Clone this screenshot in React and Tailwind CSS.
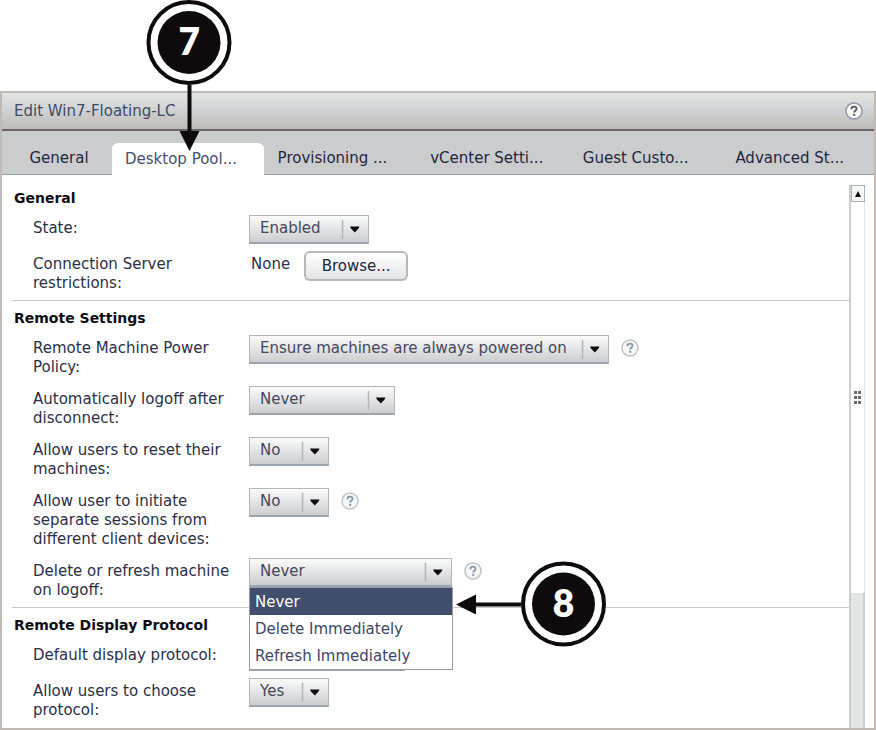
import React from "react";

const TABS = ["General", "Desktop Pool...", "Provisioning ...", "vCenter Setti...", "Guest Custo...", "Advanced St..."];

function HelpButton({ dark }) {
  return (
    <button type="button" aria-label="Help" className="block size-[18px] shrink-0">
      <svg viewBox="0 0 18 18" className="size-full">
        <circle cx="9" cy="9" r="8" fill="#f6f7f7" stroke={dark ? "#8d99a8" : "#c0c2c3"} strokeWidth="1.5" />
        <path
          d="M6.4 7.2C6.4 5.4 7.5 4.7 9 4.7s2.6.8 2.6 2.1c0 1.7-2.4 1.8-2.4 3.7"
          fill="none"
          stroke={dark ? "#5b5358" : "#8397ae"}
          strokeWidth="1.8"
        />
        <rect x="8.2" y="11.8" width="2" height="2" fill={dark ? "#5b5358" : "#8397ae"} />
      </svg>
    </button>
  );
}

function Select({ id, options, width, children }) {
  return (
    <div className={"relative shrink-0 " + width}>
      <select
        id={id}
        className="block h-[29px] w-full appearance-none border border-b-2 border-[#b5b5b3] border-b-[#9aa5b1] bg-linear-to-b from-[#fbfbfb] to-[#cbcdcf] pr-7 pb-0.5 pl-2.5 text-[15px] leading-5 text-[#45485c] outline-none"
      >
        {options.map((o) => (
          <option key={o}>{o}</option>
        ))}
      </select>
      <svg viewBox="0 0 28 28" className="pointer-events-none absolute top-0 right-0 size-7">
        <path d="M1.500 5V24" stroke="#b3b5b6" strokeWidth="1.5" />
        <path d="M9 11.500h9.500l-1 2-3.750 4-3.750-4z" fill="#0e0b10" />
      </svg>
      {children}
    </div>
  );
}

function Row({ label, id, children, help }) {
  return (
    <div className="flex items-start">
      <label htmlFor={id} className="w-[216px] shrink-0 pt-1 pr-3 text-[#2a3047]">
        {label}
      </label>
      {children}
      {help && (
        <div className="pt-1 pl-3">
          <HelpButton />
        </div>
      )}
    </div>
  );
}

function Section({ title, gap, children }) {
  return (
    <section className="ml-2.5 border-b border-[#c6c8c9] pt-2 pb-[7px] last:border-b-0">
      <h2 className="mb-[7px] pl-0.5 text-[14px] font-bold text-[#0f0d14]">{title}</h2>
      <div className={"flex flex-col pl-[21px] " + gap}>{children}</div>
    </section>
  );
}

function Badge({ n }) {
  return (
    <span className="flex size-[85px] shrink-0 items-center justify-center rounded-full border-4 border-[#0f0b0d] bg-white">
      <span className="flex size-[63px] items-center justify-center rounded-full bg-[#0f0b0d] pb-1 font-[Lato,sans-serif] text-[37px] leading-none font-extrabold text-white">
        {n}
      </span>
    </span>
  );
}

function LogoffMenu() {
  return (
    <ul
      role="listbox"
      aria-label="Delete or refresh machine on logoff"
      className="absolute top-[29px] left-0 z-10 w-[204px] border border-[#9a9ca3] bg-white leading-[28px] text-[#3d4768]"
    >
      <li role="option" aria-selected="true" className="relative h-[27px] bg-[#414e6e] pl-[5px] text-white">
        Never
        <span className="absolute top-[60%] left-full flex -translate-y-1/2 items-center pl-1">
          <svg viewBox="0 0 65 20" className="h-5 w-[65px]">
            <path d="M0 10L20 0V8H65V12H20V20z" fill="#0f0b0d" />
          </svg>
          <Badge n="8" />
        </span>
      </li>
      <li role="option" aria-selected="false" className="h-[27px] pl-[5px]">
        Delete Immediately
      </li>
      <li role="option" aria-selected="false" className="h-[27px] pl-[5px]">
        Refresh Immediately
      </li>
    </ul>
  );
}

export default function App() {
  return (
    <div className="flex min-h-screen flex-col overflow-hidden bg-white pt-[91px] font-['DejaVu_Sans',sans-serif] text-[15px] leading-[19px]">
      <main className="flex flex-1 flex-col border-2 border-[#bfbab5]">
        <header className="flex h-[38px] items-center justify-between border-b-2 border-[#6b6468] bg-linear-to-b from-[#e3e5e4] via-[#cfd1d2] to-[#bdbbb7] pr-[11px] pl-3">
          <h1 className="text-[#3f4a68]">Edit Win7-Floating-LC</h1>
          <HelpButton dark />
        </header>

        <div role="tablist" className="flex items-end bg-[#cbccce] pt-3">
          {TABS.map((t, i) =>
            i === 1 ? (
              <button
                key={t}
                type="button"
                role="tab"
                aria-selected="true"
                className="relative h-8 min-w-0 flex-1 rounded-t-md bg-white pl-[13px] text-left whitespace-nowrap text-[#454f70]"
              >
                {t}
                <span className="absolute bottom-6 left-[51%] flex -translate-x-1/2 flex-col items-center">
                  <Badge n="7" />
                  <svg viewBox="0 0 20 66" className="h-[66px] w-5">
                    <path d="M8 0H12V46H20L10 66L0 46H8z" fill="#0f0b0d" />
                  </svg>
                </span>
              </button>
            ) : (
              <button
                key={t}
                type="button"
                role="tab"
                aria-selected="false"
                className={
                  "h-8 border-b border-[#93a0ae] whitespace-nowrap text-[#1f2740] " +
                  (i === 0 ? "w-[110px] pl-1" : "min-w-0 flex-1 pl-[14px] text-left")
                }
              >
                {t}
              </button>
            )
          )}
        </div>

        <div className="flex flex-1 pt-1.5">
          <form className="min-w-0 flex-1">
            <Section title="General" gap="gap-[7px]">
              <Row label="State:" id="state">
                <Select id="state" width="w-[120px]" options={["Enabled", "Disabled"]} />
              </Row>
              <Row label="Connection Server restrictions:" id="browse">
                <span className="pt-1 pl-0.5 text-[#2a3047]">None</span>
                <button
                  id="browse"
                  type="button"
                  className="ml-3.5 h-[30px] w-[104px] rounded-md border-2 border-[#b9b8b6] bg-linear-to-b from-white to-[#e3e5e6] text-[#1f2740]"
                >
                  Browse...
                </button>
              </Row>
            </Section>

            <Section title="Remote Settings" gap="gap-[9px]">
              <Row label="Remote Machine Power Policy:" id="power" help>
                <Select id="power" width="w-[360px]" options={["Ensure machines are always powered on"]} />
              </Row>
              <Row label="Automatically logoff after disconnect:" id="logoff">
                <Select id="logoff" width="w-[146px]" options={["Never", "Immediately"]} />
              </Row>
              <Row label="Allow users to reset their machines:" id="reset">
                <Select id="reset" width="w-[80px]" options={["No", "Yes"]} />
              </Row>
              <Row label="Allow user to initiate separate sessions from different client devices:" id="sessions" help>
                <Select id="sessions" width="w-[80px]" options={["No", "Yes"]} />
              </Row>
              <Row label="Delete or refresh machine on logoff:" id="refresh" help>
                <Select id="refresh" width="w-[203px]" options={["Never", "Delete Immediately", "Refresh Immediately"]}>
                  <LogoffMenu />
                </Select>
              </Row>
            </Section>

            <Section title="Remote Display Protocol" gap="gap-[7px]">
              <Row label="Default display protocol:" id="protocol">
                <Select id="protocol" width="w-[156px]" options={["PCoIP"]} />
              </Row>
              <Row label="Allow users to choose protocol:" id="choose">
                <Select id="choose" width="w-[80px]" options={["Yes", "No"]} />
              </Row>
            </Section>
          </form>

          <div className="mt-1 mr-[9px] flex w-4 flex-col border-l-2 border-[#cbcecd]">
            <button
              type="button"
              aria-label="Scroll up"
              className="flex h-[17px] items-center justify-center border border-[#a9b1b9] bg-[#f6f7f7]"
            >
              <svg viewBox="0 0 6 6" className="size-1.5">
                <path d="M3 0L6 6H0z" fill="#0f0b0d" />
              </svg>
            </button>
            <div className="flex flex-[391] items-center justify-center border-r border-dotted border-[#cfd1d1] bg-white">
              <svg viewBox="0 0 7 13" className="h-[13px] w-[7px]" fill="#6c6a72">
                <path d="M0 0h3v3H0zM4 0h3v3H4zM0 5h3v3H0zM4 5h3v3H4zM0 10h3v3H0zM4 10h3v3H4z" />
              </svg>
            </div>
            <div className="flex-[135] border-r-2 border-[#cbcecd] bg-[#e3e6e5]" />
          </div>
        </div>
      </main>
    </div>
  );
}
